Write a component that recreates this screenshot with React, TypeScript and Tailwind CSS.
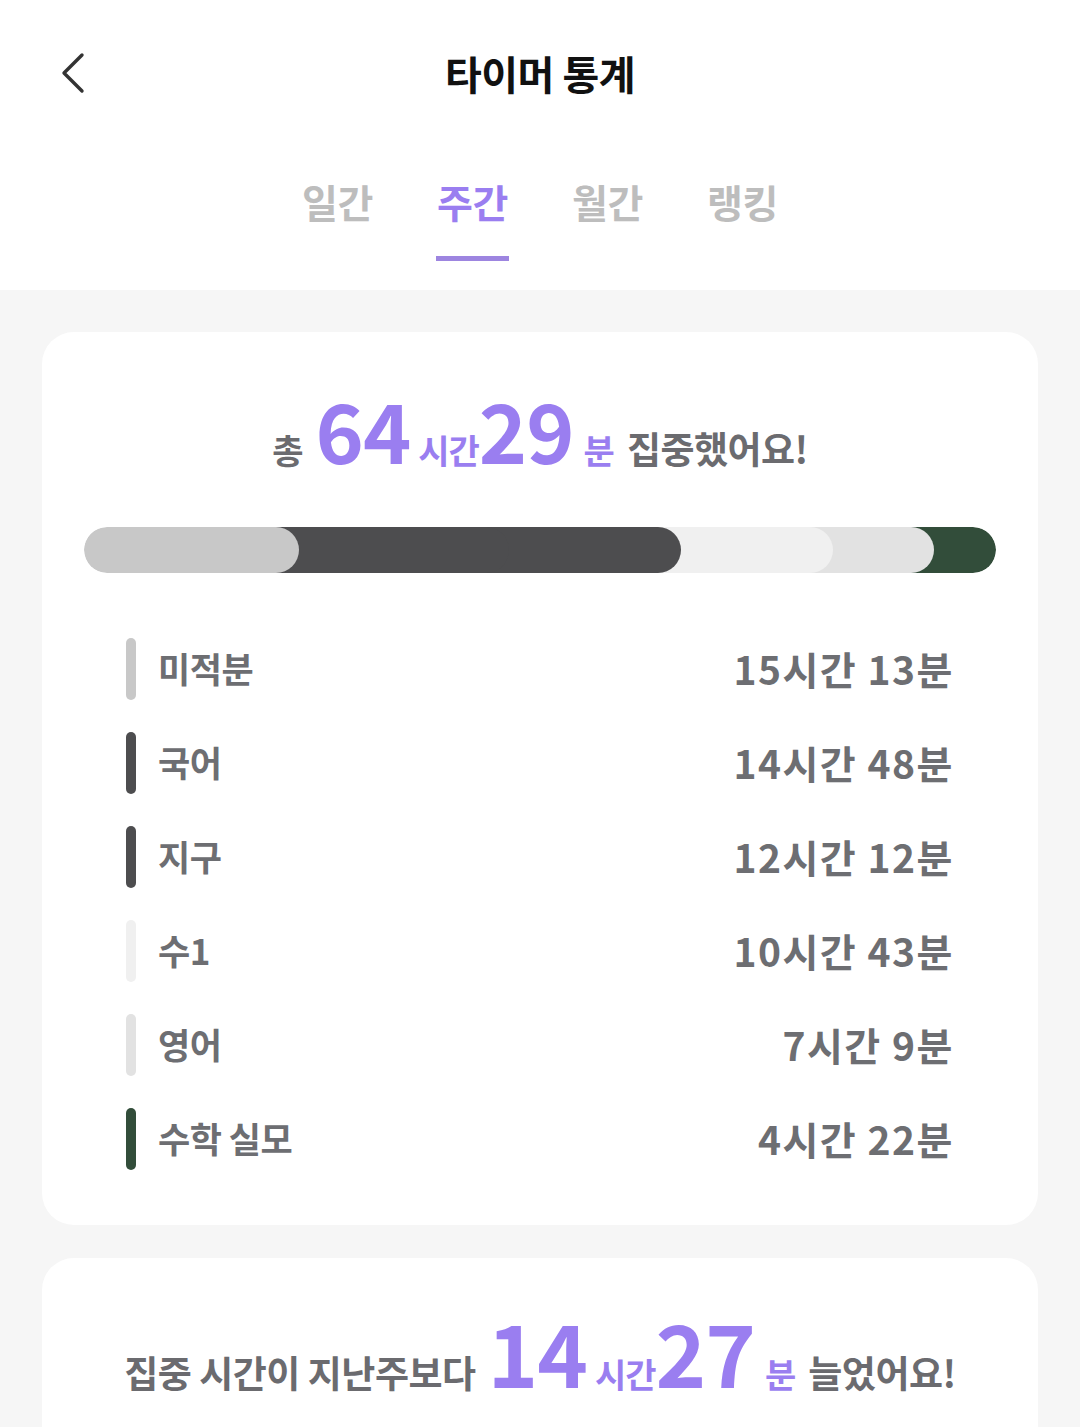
import React from 'react';

interface Subject {
  name: string;
  minutes: number;
  color: string;
}

const subjects: Subject[] = [
  { name: '미적분', minutes: 913, color: '#c8c8c8' },
  { name: '국어', minutes: 888, color: '#4d4d4f' },
  { name: '지구', minutes: 732, color: '#4d4d4f' },
  { name: '수1', minutes: 643, color: '#f0f0f0' },
  { name: '영어', minutes: 429, color: '#e2e2e2' },
  { name: '수학 실모', minutes: 262, color: '#324d3a' },
];

const tabs = ['일간', '주간', '월간', '랭킹'];
const BAR_WIDTH = 912;
const RADIUS = 23;

function fmt(min: number) {
  const h = Math.floor(min / 60);
  const m = min % 60;
  return `${h}시간 ${m}분`;
}

function StackedBar() {
  const total = subjects.reduce((s, x) => s + x.minutes, 0);
  return (
    <div className="flex h-[46px] rounded-full overflow-hidden">
      {subjects.map((s, i) => {
        const w = (s.minutes / total) * BAR_WIDTH;
        return (
          <div
            key={s.name}
            className="relative h-full rounded-full shrink-0"
            style={{
              width: i === 0 ? w : w + RADIUS * 2,
              marginLeft: i === 0 ? 0 : -RADIUS * 2,
              backgroundColor: s.color,
              zIndex: subjects.length - i,
            }}
          />
        );
      })}
    </div>
  );
}

export default function App() {
  return (
    <div
      className="w-[1080px] h-[1427px] overflow-hidden bg-[#f6f6f6]"
      style={{ fontFamily: '"Noto Sans CJK KR", "Noto Sans", sans-serif' }}
    >
      <div className="bg-white">
        <div className="h-[146px] grid grid-cols-[1fr_auto_1fr] items-center">
          <div className="pl-[52px]">
            <svg width="44" height="44" viewBox="0 0 44 44" fill="none">
              <path d="M30 4 L12 22 L30 40" stroke="#333" strokeWidth="3.4" strokeLinecap="round" strokeLinejoin="round" />
            </svg>
          </div>
          <h1 className="text-[40px] font-bold text-[#111] tracking-[-0.5px] leading-none">타이머 통계</h1>
          <div />
        </div>
        <div className="h-[144px] flex justify-center gap-[62px] pt-[36px]">
          {tabs.map((t, i) => (
            <div key={t} className="flex flex-col items-center">
              <span
                className={`text-[39px] font-bold leading-none tracking-[-0.5px] ${
                  i === 1 ? 'text-[#9a7ef0]' : 'text-[#bdbdbd]'
                }`}
              >
                {t}
              </span>
              <div className={`mt-[35px] h-[5px] w-[73px] ${i === 1 ? 'bg-[#9d85e0]' : 'bg-transparent'}`} />
            </div>
          ))}
        </div>
      </div>

      <div className="px-[42px] pt-[42px]">
        <div className="bg-white rounded-[32px] pb-[39px]">
          <div className="pt-[56px] flex items-baseline justify-center text-[#6b6b6f] font-bold">
            <span className="text-[34px] mr-[12px]">총</span>
            <span className="text-[82px] leading-none text-[#9a7ef0] tracking-[-1px]">64</span>
            <span className="text-[34px] text-[#9a7ef0] ml-[8px] tracking-[-1px]">시간</span>
            <span className="text-[82px] leading-none text-[#9a7ef0] tracking-[-1px]">29</span>
            <span className="text-[34px] text-[#9a7ef0] ml-[10px] mr-[12px]">분</span>
            <span className="text-[37px] tracking-[-0.5px]">집중했어요!</span>
          </div>

          <div className="px-[42px] mt-[50px]">
            <StackedBar />
          </div>

          <div className="px-[84px] mt-[49px]">
            {subjects.map((s) => (
              <div key={s.name} className="h-[94px] flex items-center">
                <div className="w-[10px] h-[62px] rounded-full" style={{ backgroundColor: s.color }} />
                <span className="ml-[22px] text-[35px] font-bold text-[#6d6e72] tracking-[-0.5px]">{s.name}</span>
                <span className="ml-auto text-[39px] font-bold text-[#6d6e72] tracking-[1.5px]">{fmt(s.minutes)}</span>
              </div>
            ))}
          </div>
        </div>

        <div className="bg-white rounded-[32px] mt-[33px] h-[400px] pt-[50px]">
          <div className="flex items-baseline justify-center text-[#6b6b6f] font-bold">
            <span className="text-[37px] tracking-[-0.5px] mr-[12px]">집중 시간이 지난주보다</span>
            <span className="text-[86px] leading-none text-[#9a7ef0] tracking-[-1px]">14</span>
            <span className="text-[34px] text-[#9a7ef0] ml-[8px] tracking-[-1px]">시간</span>
            <span className="text-[86px] leading-none text-[#9a7ef0] tracking-[-1px]">27</span>
            <span className="text-[34px] text-[#9a7ef0] ml-[10px] mr-[12px]">분</span>
            <span className="text-[37px] tracking-[-0.5px]">늘었어요!</span>
          </div>
        </div>
      </div>
    </div>
  );
}
